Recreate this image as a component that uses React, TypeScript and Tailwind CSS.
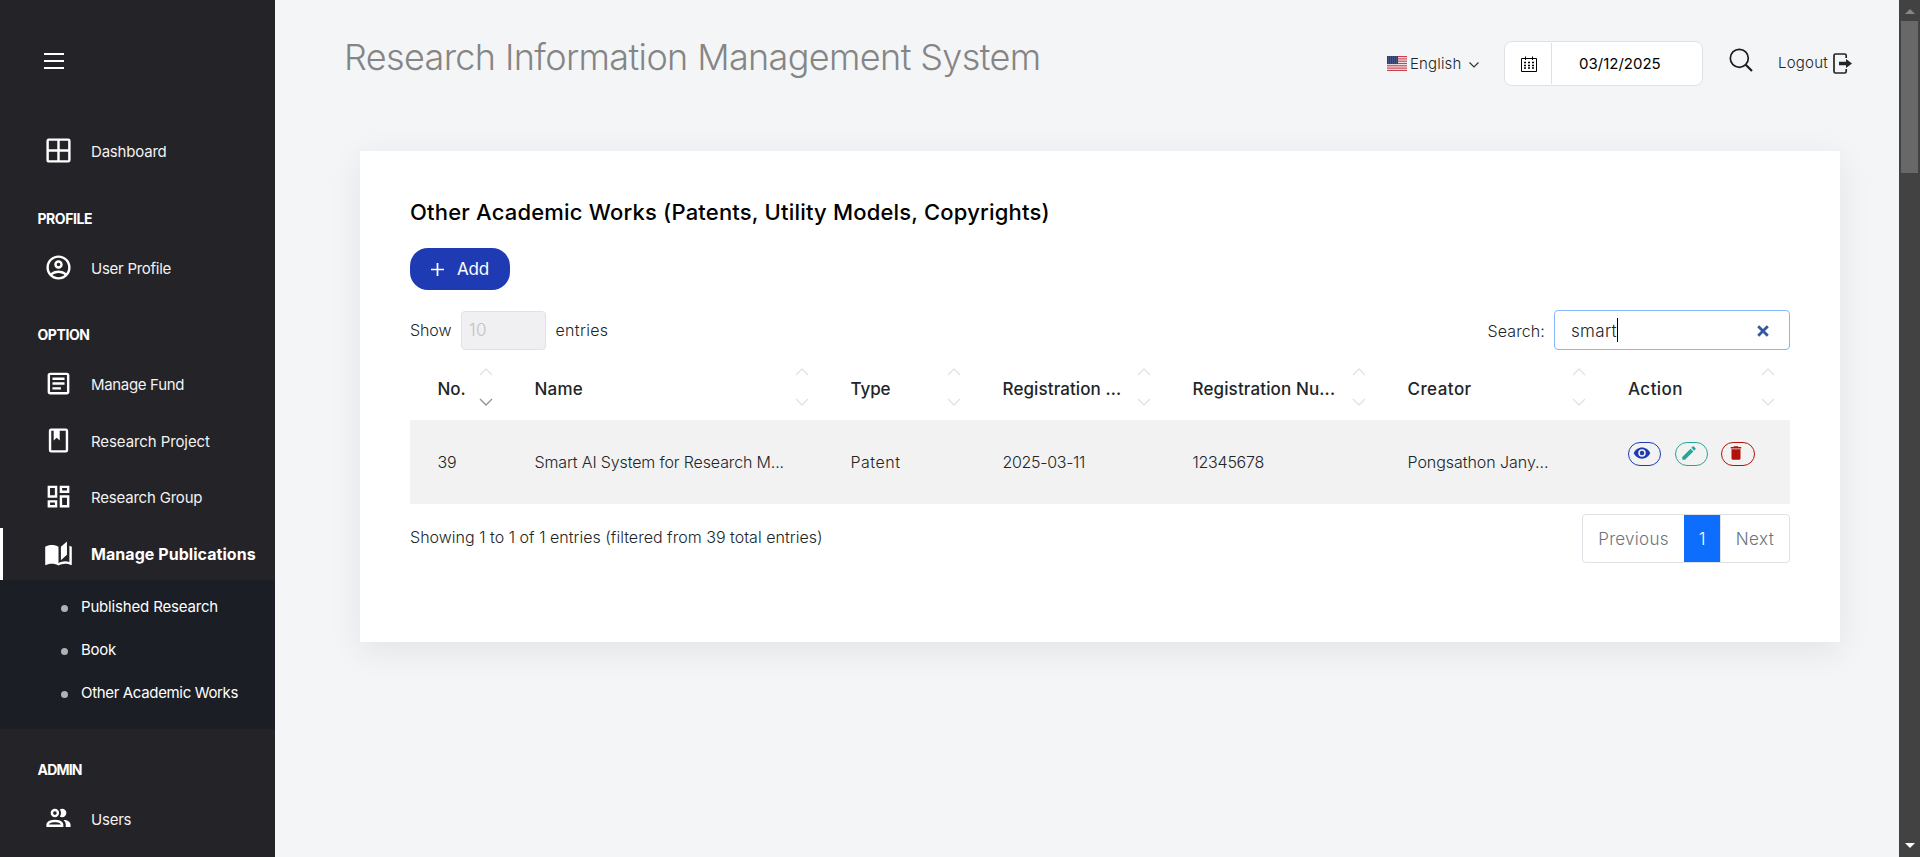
import type { ReactNode } from "react";

const icons = {
  grid: "M4,2H20A2,2 0 0,1 22,4V20A2,2 0 0,1 20,22H4C2.92,22 2,21.1 2,20V4A2,2 0 0,1 4,2M4,4V11H11V4H4M4,20H11V13H4V20M20,20V13H13V20H20M20,4H13V11H20V4Z",
  account:
    "M12,2A10,10 0 0,0 2,12A10,10 0 0,0 12,22A10,10 0 0,0 22,12A10,10 0 0,0 12,2M7.07,18.28C7.5,17.38 10.12,16.5 12,16.5C13.88,16.5 16.5,17.38 16.93,18.28C15.57,19.36 13.86,20 12,20C10.14,20 8.43,19.36 7.07,18.28M18.36,16.83C16.93,15.09 13.46,14.5 12,14.5C10.54,14.5 7.07,15.09 5.64,16.83C4.62,15.5 4,13.82 4,12C4,7.59 7.59,4 12,4C16.41,4 20,7.59 20,12C20,13.82 19.38,15.5 18.36,16.83M12,6C10.06,6 8.5,7.56 8.5,9.5C8.5,11.44 10.06,13 12,13C13.94,13 15.5,11.44 15.5,9.5C15.5,7.56 13.94,6 12,6M12,11A1.5,1.5 0 0,1 10.5,9.5A1.5,1.5 0 0,1 12,8A1.5,1.5 0 0,1 13.5,9.5A1.5,1.5 0 0,1 12,11Z",
  document:
    "M5,3C3.89,3 3,3.89 3,5V19C3,20.11 3.89,21 5,21H19C20.11,21 21,20.11 21,19V5C21,3.89 20.11,3 19,3H5M5,5H19V19H5V5M7,7V9H17V7H7M7,11V13H17V11H7M7,15V17H14V15H7Z",
  book: "M18,2A2,2 0 0,1 20,4V20A2,2 0 0,1 18,22H6A2,2 0 0,1 4,20V4A2,2 0 0,1 6,2H18M18,4H13V12L10.5,9.75L8,12V4H6V20H18V4Z",
  dashboard:
    "M19,5V7H15V5H19M9,5V11H5V5H9M19,13V19H15V13H19M9,17V19H5V17H9M21,3H13V9H21V3M11,3H3V13H11V3M21,11H13V21H21V11M11,15H3V21H11V15Z",
  openBook:
    "M19,2L14,6.5V17.5L19,13V2M6.5,5C4.55,5 2.45,5.4 1,6.5V21.16C1,21.41 1.25,21.66 1.5,21.66C1.6,21.66 1.65,21.59 1.75,21.59C3.1,20.94 5.05,20.5 6.5,20.5C8.45,20.5 10.55,20.9 12,22C13.35,21.15 15.8,20.5 17.5,20.5C19.15,20.5 20.85,20.81 22.25,21.56C22.35,21.61 22.4,21.59 22.5,21.59C22.75,21.59 23,21.34 23,21.09V6.5C22.4,6.05 21.75,5.75 21,5.5V19C19.9,18.65 18.7,18.5 17.5,18.5C15.8,18.5 13.35,19.15 12,20V6.5C10.55,5.4 8.45,5 6.5,5Z",
  users:
    "M13.07,10.41A5,5 0 0,0 13.07,4.59A3.39,3.39 0 0,1 15,4A3.5,3.5 0 0,1 15,11A3.39,3.39 0 0,1 13.07,10.41M5.5,7.5A3.5,3.5 0 1,1 9,11A3.5,3.5 0 0,1 5.5,7.5M7.5,7.5A1.5,1.5 0 1,0 9,6A1.5,1.5 0 0,0 7.5,7.5M16,17V19H2V17S2,13 9,13 16,17 16,17M14,17C13.86,16.22 12.67,15 9,15S4.07,16.31 4,17M15.95,13A5.32,5.32 0 0,1 18,17V19H22V17S22,13.37 15.94,13Z",
  eye: "M12,9A3,3 0 0,0 9,12A3,3 0 0,0 12,15A3,3 0 0,0 15,12A3,3 0 0,0 12,9M12,17A5,5 0 0,1 7,12A5,5 0 0,1 12,7A5,5 0 0,1 17,12A5,5 0 0,1 12,17M12,4.5C7,4.5 2.73,7.61 1,12C2.73,16.39 7,19.5 12,19.5C17,19.5 21.27,16.39 23,12C21.27,7.61 17,4.5 12,4.5Z",
  pencil:
    "M20.71,7.04C21.1,6.65 21.1,6 20.71,5.63L18.37,3.29C18,2.9 17.35,2.9 16.96,3.29L15.12,5.12L18.87,8.87M3,17.25V21H6.75L17.81,9.93L14.06,6.18L3,17.25Z",
  trash:
    "M19,4H15.5L14.5,3H9.5L8.5,4H5V6H19M6,19A2,2 0 0,0 8,21H16A2,2 0 0,0 18,19V7H6V19Z",
};

function Icon({ d, className }: { d: string; className: string }) {
  return (
    <svg viewBox="0 0 24 24" fill="currentColor" className={className}>
      <path d={d} />
    </svg>
  );
}

function NavItem({
  icon,
  track,
  active = false,
  className = "",
  children,
}: {
  icon: string;
  track: string;
  active?: boolean;
  className?: string;
  children: ReactNode;
}) {
  return (
    <a
      className={`flex h-[52px] shrink-0 items-center whitespace-nowrap border-l-[3px] pl-[40.5px] ${
        active ? "border-white text-[16px] font-bold text-white" : "border-transparent text-[15px] text-[#f2f2f2]"
      } ${track} ${className}`}
    >
      <Icon d={icon} className="mb-px mr-[18.5px] size-[29px] shrink-0 text-white" />
      <span className={active ? "" : "pt-[2px]"}>{children}</span>
    </a>
  );
}

function NavLabel({ track, className, children }: { track: string; className: string; children: ReactNode }) {
  return (
    <div className={`h-5 shrink-0 pl-[37.5px] text-[14px] font-bold leading-5 text-white ${track} ${className}`}>
      {children}
    </div>
  );
}

function SubItem({ track, children }: { track: string; children: ReactNode }) {
  return (
    <li className={`flex h-[43px] items-center whitespace-nowrap pl-[61px] text-[15px] text-white ${track}`}>
      <span className="mr-[13px] mt-[3px] size-[7px] rounded-full bg-[#b1b1b1]" />
      <span className="pt-[2px]">{children}</span>
    </li>
  );
}

function Sidebar() {
  return (
    <aside className="flex h-full w-[275px] shrink-0 flex-col overflow-hidden bg-[#242327]">
      <div className="flex h-[125px] shrink-0 flex-col gap-[5px] pl-11 pt-[53px]">
        <span className="h-[2px] w-5 bg-white" />
        <span className="h-[2px] w-5 bg-white" />
        <span className="h-[2px] w-5 bg-white" />
      </div>
      <NavItem icon={icons.grid} track="tracking-[-0.2px]">Dashboard</NavItem>
      <NavLabel track="tracking-[-0.45px]" className="mt-[32px]">PROFILE</NavLabel>
      <NavItem icon={icons.account} track="tracking-[-0.26px]" className="mt-[13px]">User Profile</NavItem>
      <NavLabel track="tracking-[-0.43px]" className="mt-[31px]">OPTION</NavLabel>
      <NavItem icon={icons.document} track="tracking-[-0.33px]" className="mt-[13px]">Manage Fund</NavItem>
      <NavItem icon={icons.book} track="tracking-[-0.09px]" className="mt-[5px]">Research Project</NavItem>
      <NavItem icon={icons.dashboard} track="tracking-[-0.2px]" className="mt-1">Research Group</NavItem>
      <NavItem icon={icons.openBook} track="tracking-[0.05px]" active className="mt-[5px]">Manage Publications</NavItem>
      <ul className="h-[149px] shrink-0 bg-[#1b1e24] pt-[5px]">
        <SubItem track="tracking-[-0.17px]">Published Research</SubItem>
        <SubItem track="tracking-[-0.26px]">Book</SubItem>
        <SubItem track="tracking-[-0.34px]">Other Academic Works</SubItem>
      </ul>
      <NavLabel track="tracking-[-0.8px]" className="mt-[31px]">ADMIN</NavLabel>
      <NavItem icon={icons.users} track="tracking-[-0.22px]" className="mt-[13px]">Users</NavItem>
    </aside>
  );
}

function Flag() {
  return (
    <svg viewBox="0 0 20 15" className="h-[15px] w-5 shrink-0">
      <rect width="20" height="15" fill="#f6eef0" />
      {[0, 2, 4, 6, 8, 10, 12].map((i) => (
        <rect key={i} y={i * 1.154} width="20" height="1.154" fill="#c8414f" />
      ))}
      <rect width="11" height="8.08" fill="#2f3e72" />
      {[1, 3, 5, 7].map((y) =>
        [1, 3, 5, 7, 9].map((x) => <rect key={`${x}-${y}`} x={x} y={y - 0.3} width="0.8" height="0.7" fill="#8590b4" />)
      )}
    </svg>
  );
}

function Header() {
  return (
    <header className="flex h-[127px] shrink-0 items-center pl-[69px] pr-[47px] text-[#212529]">
      <h1 className="whitespace-nowrap pb-[13px] text-[36px] font-light tracking-[-0.63px] text-[#858585]">
        Research Information Management System
      </h1>
      <div className="ml-auto flex items-center">
        <Flag />
        <span className="ml-[3px] w-[59px] pt-[2px] text-[15px] font-light tracking-[0.15px]">English</span>
        <svg viewBox="0 0 10 6" className="mr-px mt-[2px] h-[6px] w-[10px] fill-none stroke-[#333] stroke-[1.2]">
          <path d="M0.5 0.5L5 5L9.5 0.5" />
        </svg>
        <div className="ml-[24px] flex h-[45px] w-[199px] items-center rounded-lg border border-[#dee2e6] bg-white">
          <div className="flex h-[41px] w-[47px] items-center justify-center border-r border-[#dcdfe3] pl-px">
            <svg viewBox="0 0 16 16" className="h-4 w-4 fill-none stroke-black stroke-1">
              <path d="M0.5 2.5H15.5V15.5H0.5ZM4.5 0.5V4M11.5 0.5V4" />
              <path d="M3 6.5H13M3 9.5H13M3 12H13" strokeDasharray="2 2" strokeWidth="1.4" />
            </svg>
          </div>
          <span className="pl-[27px] pt-[2px] text-[15px] font-normal text-black">03/12/2025</span>
        </div>
        <svg viewBox="0 0 24 24" className="mb-[8px] ml-[26px] size-6 fill-none stroke-[#1c1c1e] stroke-[1.7]">
          <circle cx="10.3" cy="10.3" r="9" />
          <path d="M16.7 16.7L23 23" strokeWidth="2.2" />
        </svg>
        <span className="ml-[25px] w-[55px] text-[15px] font-light tracking-[0.23px]">Logout</span>
        <svg viewBox="0 0 19 21" className="h-[21px] w-[19px]">
          <path
            d="M13.2 5V2.5Q13.2 1 11.7 1H2.5Q1 1 1 2.5V18.5Q1 20 2.5 20H11.7Q13.2 20 13.2 18.5V16"
            fill="none"
            stroke="#212529"
            strokeWidth="1.7"
          />
          <path d="M6 8.7H13V6L19 10.5L13 15V12.3H6Z" fill="#212529" />
        </svg>
      </div>
    </header>
  );
}

function SortArrows({ desc = false }: { desc?: boolean }) {
  return (
    <svg viewBox="0 0 14 38" className="mb-[4px] h-[38px] w-[14px] shrink-0 fill-none stroke-[1.3]">
      <path d="M1 7L7 1L13 7" className="stroke-[#e2e2e2]" />
      <path d="M1 31L7 37L13 31" className={desc ? "stroke-[#8f9092]" : "stroke-[#e2e2e2]"} />
    </svg>
  );
}

const columns = [
  { label: "No.", track: "tracking-[-0.09px]", value: "39", valueTrack: "tracking-[-0.1px]", desc: true },
  { label: "Name", track: "tracking-[0.2px]", value: "Smart AI System for Research M...", valueTrack: "tracking-[-0.14px]" },
  { label: "Type", track: "tracking-[-0.07px]", value: "Patent", valueTrack: "tracking-[0.5px]" },
  { label: "Registration ...", track: "tracking-[0.1px]", value: "2025-03-11", valueTrack: "tracking-[-0.31px]" },
  { label: "Registration Nu...", track: "tracking-[0.13px]", value: "12345678", valueTrack: "tracking-[-0.25px]" },
  { label: "Creator", track: "tracking-[0.45px]", value: "Pongsathon Jany...", valueTrack: "tracking-[-0.05px]" },
];

const gridCols = "grid grid-cols-[97px_316px_152px_190px_215px_220px_190px]";

function DataTable() {
  return (
    <div className="mt-2 whitespace-nowrap text-[#212529]">
      <div className={`${gridCols} h-[62px] text-[17px] font-medium`}>
        {columns.map((c) => (
          <div key={c.label} className="flex items-center justify-between pl-[27.5px] pr-[14.5px]">
            <span className={`pt-[2px] ${c.track}`}>{c.label}</span>
            <SortArrows desc={c.desc} />
          </div>
        ))}
        <div className="flex items-center justify-between pl-[28px] pr-[15px]">
          <span className="pt-[2px] tracking-[0.45px]">Action</span>
          <SortArrows />
        </div>
      </div>
      <div className={`${gridCols} h-[84px] bg-[#f2f2f2] text-[16px] font-light`}>
        {columns.map((c) => (
          <div key={c.label} className={`flex items-center pl-[27.5px] ${c.valueTrack}`}>
            {c.value}
          </div>
        ))}
        <div className="flex items-start pl-[28px] pt-[22px]">
          <button className="flex h-6 w-[33px] items-center rounded-full border border-[#1f3bb3] pl-[4px] text-[#1f3bb3]">
            <Icon d={icons.eye} className="mb-[2px] size-[18px]" />
          </button>
          <button className="ml-[14px] flex h-6 w-[33px] items-center rounded-full border border-[#26a69a] pl-[4px] text-[#26a69a]">
            <Icon d={icons.pencil} className="mb-[2px] size-[18px]" />
          </button>
          <button className="ml-[13px] flex h-6 w-[34px] items-center rounded-full border border-[#b3120c] pl-[5px] text-[#b3120c]">
            <Icon d={icons.trash} className="mb-[2px] size-[18px]" />
          </button>
        </div>
      </div>
    </div>
  );
}

function Card() {
  return (
    <section className="ml-[85px] mt-6 flex h-[491px] w-[1480px] flex-col bg-white px-[50px] text-[#212529] shadow-[0_8px_30px_rgba(40,50,70,0.09)]">
      <h2 className="mt-[46px] h-[30px] whitespace-nowrap text-[22px] font-medium leading-[30px] tracking-[0.19px] text-black">
        Other Academic Works (Patents, Utility Models, Copyrights)
      </h2>
      <button className="mt-[21px] flex h-[42px] w-[100px] items-center rounded-[18px] bg-[#1f3bb3] pl-[21px] text-[17px] tracking-[-0.19px] text-white">
        <svg viewBox="0 0 13 13" className="mr-[13px] size-[13px] stroke-white stroke-[1.7]">
          <path d="M6.5 0V13M0 6.5H13" />
        </svg>
        <span className="pt-[2px]">Add</span>
      </button>
      <div className="mt-[20px] flex h-10 items-center text-[16px] font-light">
        <span className="w-[51px] tracking-[-0.1px]">Show</span>
        <div className="flex h-[39px] w-[85px] items-center rounded border border-[#dee2e6] bg-[#f0f0f2] pl-[7px] pt-[2px] text-[17px] tracking-[0.4px] text-[#c2c2c2]">
          10
        </div>
        <span className="ml-[9.5px] tracking-[0.33px]">entries</span>
        <span className="ml-auto mr-[9px] pt-[2px] tracking-[0.1px]">Search:</span>
        <div className="flex h-10 w-[236px] items-center rounded border border-[#86b7fe] pl-[16px] pr-[20px] text-[17px] tracking-[0.32px]">
          <span className="pt-[3px]">smart</span>
          <span className="h-6 w-px bg-black" />
          <svg viewBox="0 0 12 12" className="ml-auto mt-px size-3 stroke-[#34599c] stroke-[2.8]">
            <path d="M1.2 1.2L10.8 10.8M10.8 1.2L1.2 10.8" />
          </svg>
        </div>
      </div>
      <DataTable />
      <div className="mt-[10px] flex justify-between">
        <p className="pt-[11px] text-[16px] font-light leading-6 tracking-[0.02px]">
          Showing 1 to 1 of 1 entries (filtered from 39 total entries)
        </p>
        <div className="flex h-[49px] w-[208px] rounded border border-[#dee2e6] text-[17px] font-light text-[#6c757d]">
          <span className="flex w-[101px] items-center justify-center pt-[2px] tracking-[0.27px]">Previous</span>
          <span className="flex w-9 items-center justify-center bg-[#0d6efd] pt-[2px] text-white">1</span>
          <span className="flex flex-1 items-center justify-center border-l border-[#dee2e6] pt-[2px] tracking-[0.44px]">
            Next
          </span>
        </div>
      </div>
    </section>
  );
}

function Scrollbar() {
  return (
    <div className="flex h-full w-[21px] shrink-0 flex-col items-center bg-[#424242]">
      <svg viewBox="0 0 10 5" className="mt-[9px] h-[5px] w-[10px] shrink-0 fill-[#868686]">
        <path d="M0 5L5 0L10 5Z" />
      </svg>
      <div className="mt-[7px] h-[152px] w-[17px] shrink-0 bg-[#686868]" />
      <svg viewBox="0 0 10 5" className="mb-[9px] mt-auto h-[5px] w-[10px] shrink-0 fill-white">
        <path d="M0 0L5 5L10 0Z" />
      </svg>
    </div>
  );
}

export default function App() {
  return (
    <div className="flex h-[857px] w-[1920px] overflow-hidden bg-[#f4f5f7] font-[Inter,'Liberation_Sans',sans-serif]">
      <Sidebar />
      <main className="flex min-w-0 flex-1 flex-col">
        <Header />
        <Card />
      </main>
      <Scrollbar />
    </div>
  );
}
